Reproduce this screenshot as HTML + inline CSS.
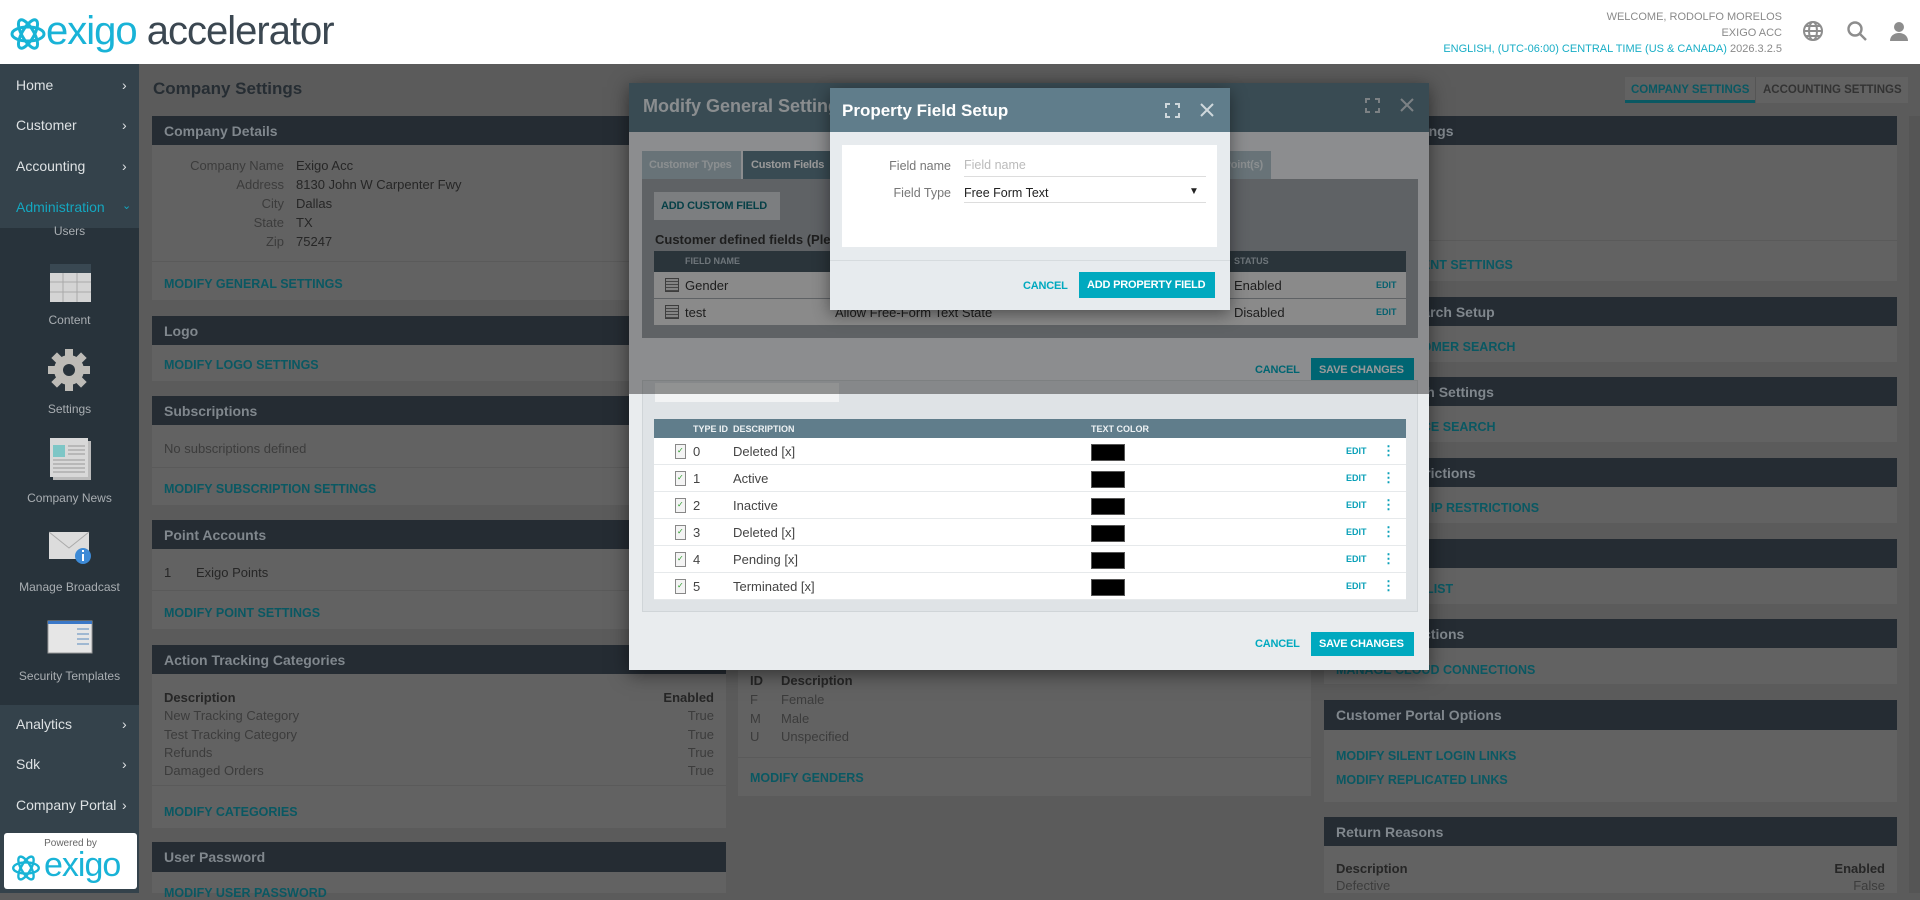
<!DOCTYPE html>
<html><head><meta charset="utf-8">
<style>
*{box-sizing:border-box;margin:0;padding:0}
body{width:1920px;height:893px;overflow:hidden;position:relative;background:#5b5b5b;font-family:"Liberation Sans",sans-serif;font-size:13px;color:#262626}
.a{position:absolute;white-space:nowrap}
.hdr{background:#252c33;color:#80878d;font-size:14px;font-weight:bold;padding-left:12px;display:flex;align-items:center}
.pb{background:#626262}
.lk{color:#0a5862;font-weight:bold;font-size:12.5px}
.nav{color:#dde1e3;font-size:14px}
.sub{color:#a9aeb2;font-size:12px;text-align:center;width:139px}
.lbl{color:#3c3c3c;text-align:right;width:132px}
.btn{font-size:11px;font-weight:bold;letter-spacing:-0.2px}
</style></head><body>

<!-- header -->
<div class="a" style="left:0;top:0;width:1920px;height:64px;background:#fff"></div>
<svg class="a" style="left:8px;top:14px" width="40" height="40" viewBox="0 0 40 40">
<g fill="none" stroke="#18b4d6" stroke-width="3">
<ellipse cx="20" cy="20" rx="16" ry="7"/>
<ellipse cx="20" cy="20" rx="16" ry="6" transform="rotate(60 20 20)"/>
<ellipse cx="20" cy="20" rx="16" ry="6" transform="rotate(-60 20 20)"/>
</g></svg>
<div class="a" style="left:46px;top:6px;font-size:40px;letter-spacing:-1px;line-height:50px"><span style="color:#19b3d7">exigo</span> <span style="color:#3b4751">accelerator</span></div>
<div class="a" style="right:138px;top:9px;font-size:11px;color:#8a8a8a;text-align:right;line-height:16px">WELCOME, RODOLFO MORELOS<br>EXIGO ACC<br><span style="color:#19aec6">ENGLISH, (UTC-06:00) CENTRAL TIME (US &amp; CANADA)</span> 2026.3.2.5</div>
<svg class="a" style="left:1802px;top:20px" width="22" height="22" viewBox="0 0 22 22"><g fill="none" stroke="#8d8d8d" stroke-width="2"><circle cx="11" cy="11" r="9"/><ellipse cx="11" cy="11" rx="4" ry="9"/><line x1="2" y1="11" x2="20" y2="11"/><line x1="4" y1="6" x2="18" y2="6"/><line x1="4" y1="16" x2="18" y2="16"/></g></svg>
<svg class="a" style="left:1846px;top:20px" width="22" height="22" viewBox="0 0 22 22"><g fill="none" stroke="#8d8d8d" stroke-width="2.4"><circle cx="9" cy="9" r="6.5"/><line x1="14" y1="14" x2="20" y2="20"/></g></svg>
<svg class="a" style="left:1888px;top:20px" width="22" height="22" viewBox="0 0 22 22"><g fill="#8d8d8d"><circle cx="11" cy="7" r="5"/><path d="M2 21c0-5 4-8 9-8s9 3 9 8z"/></g></svg>

<!-- sidebar -->
<div class="a" style="left:0;top:64px;width:139px;height:829px;background:#34424b"></div>
<div class="a" style="left:0;top:228px;width:139px;height:477px;background:#28333b"></div>
<div class="a nav" style="left:16px;top:77px">Home</div><div class="a nav" style="left:122px;top:77px">›</div>
<div class="a nav" style="left:16px;top:117px">Customer</div><div class="a nav" style="left:122px;top:117px">›</div>
<div class="a nav" style="left:16px;top:158px">Accounting</div><div class="a nav" style="left:122px;top:158px">›</div>
<div class="a nav" style="left:16px;top:199px;color:#14a7c0">Administration</div><div class="a" style="left:122px;top:199px;color:#14a7c0;font-size:11px">⌄</div>
<div class="a sub" style="left:0;top:224px">Users</div>
<svg class="a" style="left:49px;top:262px" width="43" height="42" viewBox="0 0 43 42"><rect x="1" y="4" width="41" height="36" fill="#d4d4d4"/><rect x="1" y="2" width="41" height="9" fill="#394852"/><g stroke="#aaa" stroke-width="1"><line x1="1" y1="20" x2="42" y2="20"/><line x1="1" y1="30" x2="42" y2="30"/><line x1="14" y1="11" x2="14" y2="40"/><line x1="28" y1="11" x2="28" y2="40"/></g></svg>
<div class="a sub" style="left:0;top:313px">Content</div>
<svg class="a" style="left:47px;top:348px" width="44" height="44" viewBox="-22 -22 44 44"><g fill="#bdbbb6"><circle r="15"/><g id="t"><rect x="-4" y="-21" width="8" height="10"/></g><use href="#t" transform="rotate(45)"/><use href="#t" transform="rotate(90)"/><use href="#t" transform="rotate(135)"/><use href="#t" transform="rotate(180)"/><use href="#t" transform="rotate(225)"/><use href="#t" transform="rotate(270)"/><use href="#t" transform="rotate(315)"/></g><circle r="6" fill="#28333b"/></svg>
<div class="a sub" style="left:0;top:402px">Settings</div>
<svg class="a" style="left:49px;top:437px" width="43" height="44" viewBox="0 0 43 44"><rect x="4" y="4" width="38" height="39" fill="#bbb"/><rect x="1" y="1" width="38" height="39" fill="#d8d8d8"/><rect x="4" y="8" width="12" height="12" fill="#7dc6c6"/><g stroke="#999"><line x1="19" y1="9" x2="36" y2="9"/><line x1="19" y1="13" x2="36" y2="13"/><line x1="19" y1="17" x2="36" y2="17"/><line x1="4" y1="23" x2="36" y2="23"/><line x1="4" y1="27" x2="36" y2="27"/><line x1="4" y1="31" x2="36" y2="31"/><line x1="4" y1="35" x2="36" y2="35"/></g></svg>
<div class="a sub" style="left:0;top:491px">Company News</div>
<svg class="a" style="left:49px;top:530px" width="44" height="36" viewBox="0 0 44 36"><rect x="0" y="2" width="40" height="27" fill="#dcdcdc"/><path d="M0 2l20 16 20-16" fill="none" stroke="#aaa"/><circle cx="34" cy="26" r="8" fill="#3d8ad6"/><rect x="33" y="24" width="2" height="7" fill="#fff"/><rect x="33" y="20" width="2" height="2" fill="#fff"/></svg>
<div class="a sub" style="left:0;top:580px">Manage Broadcast</div>
<svg class="a" style="left:47px;top:620px" width="46" height="34" viewBox="0 0 46 34"><rect x="1" y="1" width="44" height="32" fill="#e6e6e6" stroke="#999"/><rect x="1" y="1" width="44" height="3" fill="#3a78c8"/><g stroke="#9fb8d2" stroke-width="2"><line x1="30" y1="9" x2="42" y2="9"/><line x1="30" y1="14" x2="42" y2="14"/><line x1="30" y1="19" x2="42" y2="19"/><line x1="30" y1="24" x2="42" y2="24"/></g></svg>
<div class="a sub" style="left:0;top:669px">Security Templates</div>
<div class="a nav" style="left:16px;top:716px">Analytics</div><div class="a nav" style="left:122px;top:716px">›</div>
<div class="a nav" style="left:16px;top:756px">Sdk</div><div class="a nav" style="left:122px;top:756px">›</div>
<div class="a nav" style="left:16px;top:797px">Company Portal</div><div class="a nav" style="left:122px;top:797px">›</div>
<div class="a" style="left:4px;top:833px;width:133px;height:56px;background:#fff;border-radius:3px"></div>
<div class="a" style="left:0;top:838px;width:141px;text-align:center;font-size:10px;color:#666">Powered by</div>
<svg class="a" style="left:10px;top:852px" width="32" height="32" viewBox="0 0 40 40"><g fill="none" stroke="#18b4d6" stroke-width="3"><ellipse cx="20" cy="20" rx="16" ry="7"/><ellipse cx="20" cy="20" rx="16" ry="6" transform="rotate(60 20 20)"/><ellipse cx="20" cy="20" rx="16" ry="6" transform="rotate(-60 20 20)"/></g></svg>
<div class="a" style="left:44px;top:843px;font-size:34px;color:#19b3d7;letter-spacing:-1px;line-height:44px">exigo</div>
<div class="a" style="left:1909px;top:116px;width:11px;height:777px;background:#555"></div>

<!-- main -->
<div class="a" style="left:153px;top:79px;font-size:17px;font-weight:bold;color:#262d33">Company Settings</div>
<div class="a" style="left:1625px;top:77px;width:283px;height:26px;background:#626262"></div>
<div class="a lk" style="left:1631px;top:84px;font-size:11.5px">COMPANY SETTINGS</div>
<div class="a" style="left:1625px;top:100px;width:130px;height:3px;background:#0a5862"></div>
<div class="a" style="left:1755px;top:77px;width:1px;height:26px;background:#555"></div>
<div class="a" style="left:1763px;top:84px;font-size:11.5px;font-weight:bold;color:#333">ACCOUNTING SETTINGS</div>

<!-- left column -->
<div class="a hdr" style="left:152px;top:116px;width:574px;height:29px">Company Details</div>
<div class="a pb" style="left:152px;top:145px;width:574px;height:155px"></div>
<div class="a lbl" style="left:152px;top:158px">Company Name</div><div class="a" style="left:296px;top:158px">Exigo Acc</div>
<div class="a lbl" style="left:152px;top:177px">Address</div><div class="a" style="left:296px;top:177px">8130 John W Carpenter Fwy</div>
<div class="a lbl" style="left:152px;top:196px">City</div><div class="a" style="left:296px;top:196px">Dallas</div>
<div class="a lbl" style="left:152px;top:215px">State</div><div class="a" style="left:296px;top:215px">TX</div>
<div class="a lbl" style="left:152px;top:234px">Zip</div><div class="a" style="left:296px;top:234px">75247</div>
<div class="a" style="left:152px;top:261px;width:574px;height:1px;background:#5a5a5a"></div>
<div class="a lk" style="left:164px;top:277px">MODIFY GENERAL SETTINGS</div>

<div class="a hdr" style="left:152px;top:316px;width:574px;height:29px">Logo</div>
<div class="a pb" style="left:152px;top:345px;width:574px;height:36px"></div>
<div class="a lk" style="left:164px;top:358px">MODIFY LOGO SETTINGS</div>

<div class="a hdr" style="left:152px;top:396px;width:574px;height:29px">Subscriptions</div>
<div class="a pb" style="left:152px;top:425px;width:574px;height:80px"></div>
<div class="a" style="left:164px;top:441px;color:#3c3c3c">No subscriptions defined</div>
<div class="a" style="left:152px;top:467px;width:574px;height:1px;background:#5a5a5a"></div>
<div class="a lk" style="left:164px;top:482px">MODIFY SUBSCRIPTION SETTINGS</div>

<div class="a hdr" style="left:152px;top:520px;width:574px;height:29px">Point Accounts</div>
<div class="a pb" style="left:152px;top:549px;width:574px;height:80px"></div>
<div class="a" style="left:164px;top:565px">1</div><div class="a" style="left:196px;top:565px">Exigo Points</div>
<div class="a" style="left:152px;top:590px;width:574px;height:1px;background:#5a5a5a"></div>
<div class="a lk" style="left:164px;top:606px">MODIFY POINT SETTINGS</div>

<div class="a hdr" style="left:152px;top:645px;width:574px;height:29px">Action Tracking Categories</div>
<div class="a pb" style="left:152px;top:674px;width:574px;height:154px"></div>
<div class="a" style="left:164px;top:690px;font-weight:bold">Description</div><div class="a" style="left:560px;width:154px;text-align:right;top:690px;font-weight:bold">Enabled</div>
<div class="a" style="left:164px;top:708px;color:#3c3c3c">New Tracking Category</div><div class="a" style="left:560px;width:154px;text-align:right;top:708px;color:#3c3c3c">True</div>
<div class="a" style="left:164px;top:727px;color:#3c3c3c">Test Tracking Category</div><div class="a" style="left:560px;width:154px;text-align:right;top:727px;color:#3c3c3c">True</div>
<div class="a" style="left:164px;top:745px;color:#3c3c3c">Refunds</div><div class="a" style="left:560px;width:154px;text-align:right;top:745px;color:#3c3c3c">True</div>
<div class="a" style="left:164px;top:763px;color:#3c3c3c">Damaged Orders</div><div class="a" style="left:560px;width:154px;text-align:right;top:763px;color:#3c3c3c">True</div>
<div class="a" style="left:152px;top:785px;width:574px;height:1px;background:#5a5a5a"></div>
<div class="a lk" style="left:164px;top:805px">MODIFY CATEGORIES</div>

<div class="a hdr" style="left:152px;top:842px;width:574px;height:30px">User Password</div>
<div class="a pb" style="left:152px;top:872px;width:574px;height:21px"></div>
<div class="a lk" style="left:164px;top:886px">MODIFY USER PASSWORD</div>

<!-- middle column -->
<div class="a hdr" style="left:738px;top:116px;width:573px;height:29px">Genders</div>
<div class="a pb" style="left:738px;top:145px;width:573px;height:651px"></div>
<div class="a" style="left:750px;top:673px;font-weight:bold">ID</div><div class="a" style="left:781px;top:673px;font-weight:bold">Description</div>
<div class="a" style="left:750px;top:692px;color:#3c3c3c">F</div><div class="a" style="left:781px;top:692px;color:#3c3c3c">Female</div>
<div class="a" style="left:750px;top:711px;color:#3c3c3c">M</div><div class="a" style="left:781px;top:711px;color:#3c3c3c">Male</div>
<div class="a" style="left:750px;top:729px;color:#3c3c3c">U</div><div class="a" style="left:781px;top:729px;color:#3c3c3c">Unspecified</div>
<div class="a" style="left:738px;top:757px;width:573px;height:1px;background:#5a5a5a"></div>
<div class="a lk" style="left:750px;top:771px">MODIFY GENDERS</div>

<!-- right column -->
<div class="a hdr" style="left:1324px;top:116px;width:573px;height:29px">Payment Settings</div>
<div class="a pb" style="left:1324px;top:145px;width:573px;height:136px"></div>
<div class="a" style="left:1324px;top:240px;width:573px;height:1px;background:#5a5a5a"></div>
<div class="a lk" style="left:1336px;top:258px">MODIFY PAYMENT SETTINGS</div>
<div class="a hdr" style="left:1324px;top:297px;width:573px;height:29px">Customer Search Setup</div>
<div class="a pb" style="left:1324px;top:326px;width:573px;height:36px"></div>
<div class="a lk" style="left:1336px;top:340px">MODIFY CUSTOMER SEARCH</div>
<div class="a hdr" style="left:1324px;top:377px;width:573px;height:29px">Invoice Search Settings</div>
<div class="a pb" style="left:1324px;top:406px;width:573px;height:36px"></div>
<div class="a lk" style="left:1336px;top:420px">MODIFY INVOICE SEARCH</div>
<div class="a hdr" style="left:1324px;top:458px;width:573px;height:29px">Login IP Restrictions</div>
<div class="a pb" style="left:1324px;top:487px;width:573px;height:36px"></div>
<div class="a lk" style="left:1336px;top:501px">MODIFY LOGIN IP RESTRICTIONS</div>
<div class="a hdr" style="left:1324px;top:539px;width:573px;height:29px">Price List</div>
<div class="a pb" style="left:1324px;top:568px;width:573px;height:36px"></div>
<div class="a lk" style="left:1336px;top:582px">MODIFY PRICELIST</div>
<div class="a hdr" style="left:1324px;top:619px;width:573px;height:29px">Cloud Connections</div>
<div class="a pb" style="left:1324px;top:648px;width:573px;height:36px"></div>
<div class="a lk" style="left:1336px;top:663px">MANAGE CLOUD CONNECTIONS</div>
<div class="a hdr" style="left:1324px;top:700px;width:573px;height:30px">Customer Portal Options</div>
<div class="a pb" style="left:1324px;top:730px;width:573px;height:72px"></div>
<div class="a lk" style="left:1336px;top:749px">MODIFY SILENT LOGIN LINKS</div>
<div class="a lk" style="left:1336px;top:773px">MODIFY REPLICATED LINKS</div>
<div class="a hdr" style="left:1324px;top:817px;width:573px;height:29px">Return Reasons</div>
<div class="a pb" style="left:1324px;top:846px;width:573px;height:47px"></div>
<div class="a" style="left:1336px;top:861px;font-weight:bold">Description</div><div class="a" style="left:1740px;width:145px;text-align:right;top:861px;font-weight:bold">Enabled</div>
<div class="a" style="left:1336px;top:878px;color:#3c3c3c">Defective</div><div class="a" style="left:1740px;width:145px;text-align:right;top:878px;color:#3c3c3c">False</div>

<!-- modal 1 -->
<div class="a" style="left:629px;top:83px;width:800px;height:587px;background:#e9ecee;box-shadow:0 4px 18px rgba(0,0,0,.5)"></div>
<div class="a" style="left:629px;top:83px;width:800px;height:49px;background:#607d8b"></div>
<div class="a" style="left:643px;top:96px;font-size:18px;font-weight:bold;color:#e6ecef">Modify General Settings</div>
<svg class="a" style="left:1365px;top:98px" width="15" height="15" viewBox="0 0 15 15"><path d="M1 5V1h4M10 1h4v4M14 10v4h-4M5 14H1v-4" fill="none" stroke="#cfd8dc" stroke-width="2"/></svg>
<svg class="a" style="left:1400px;top:98px" width="14" height="14" viewBox="0 0 14 14"><path d="M1 1l12 12M13 1L1 13" stroke="#cfd8dc" stroke-width="2"/></svg>
<div class="a btn" style="left:642px;top:151px;width:99px;height:28px;background:#aec0c9;color:#e8eef1;padding:8px 0 0 7px">Customer Types</div>
<div class="a btn" style="left:743px;top:151px;width:90px;height:28px;background:#607d8b;color:#fff;padding:8px 0 0 8px">Custom Fields</div>
<div class="a btn" style="left:835px;top:151px;width:436px;height:28px;background:#aec0c9;color:#e8eef1;text-align:right;padding:8px 8px 0 0">Point(s)</div>
<div class="a" style="left:642px;top:179px;width:776px;height:159px;background:#9ea4a9"></div>
<div class="a btn" style="left:654px;top:192px;width:126px;height:28px;background:#cfd3d6;color:#0b6b77;padding:8px 0 0 7px">ADD CUSTOM FIELD</div>
<div class="a" style="left:655px;top:232px;font-size:13px;font-weight:bold;color:#333">Customer defined fields (Please note these fields are visible)</div>
<div class="a" style="left:654px;top:251px;width:752px;height:21px;background:#465762"></div>
<div class="a" style="left:685px;top:256px;font-size:9px;font-weight:bold;color:#b7c4cb">FIELD NAME</div>
<div class="a" style="left:1234px;top:256px;font-size:9px;font-weight:bold;color:#b7c4cb">STATUS</div>
<div class="a" style="left:654px;top:272px;width:752px;height:26px;background:#e6e6e6"></div>
<div class="a" style="left:654px;top:299px;width:752px;height:26px;background:#e6e6e6"></div>
<div class="a" style="left:665px;top:278px;width:14px;height:14px;border:1px solid #666;background:repeating-linear-gradient(#ddd 0 2px,#777 2px 3px)"></div>
<div class="a" style="left:665px;top:305px;width:14px;height:14px;border:1px solid #666;background:repeating-linear-gradient(#ddd 0 2px,#777 2px 3px)"></div>
<div class="a" style="left:685px;top:278px;color:#333">Gender</div><div class="a" style="left:1234px;top:278px;color:#333">Enabled</div><div class="a" style="left:1376px;top:280px;font-size:9px;font-weight:bold;color:#0aa0b8">EDIT</div>
<div class="a" style="left:685px;top:305px;color:#333">test</div><div class="a" style="left:835px;top:305px;color:#333">Allow Free-Form Text State</div><div class="a" style="left:1234px;top:305px;color:#333">Disabled</div><div class="a" style="left:1376px;top:307px;font-size:9px;font-weight:bold;color:#0aa0b8">EDIT</div>
<div class="a btn" style="left:1255px;top:364px;color:#00a9bf">CANCEL</div>
<div class="a btn" style="left:1311px;top:358px;width:103px;height:24px;background:#00a9bf;color:#fff;padding:6px 0 0 8px">SAVE CHANGES</div>
<div class="a" style="left:642px;top:380px;width:776px;height:232px;background:#dfe3e6;border:1px solid #d0d5d8"></div>
<div class="a" style="left:655px;top:383px;width:184px;height:19px;background:#f2f3f4"></div>
<!-- overlay on modal 1 -->
<div class="a" style="left:629px;top:83px;width:800px;height:311px;background:rgba(0,0,0,.4)"></div>

<div class="a" style="left:654px;top:419px;width:752px;height:19px;background:#607d8b"></div>
<div class="a" style="left:693px;top:424px;font-size:9px;font-weight:bold;color:#eef2f4">TYPE ID</div>
<div class="a" style="left:733px;top:424px;font-size:9px;font-weight:bold;color:#eef2f4">DESCRIPTION</div>
<div class="a" style="left:1091px;top:424px;font-size:9px;font-weight:bold;color:#eef2f4">TEXT COLOR</div>
<div class="a" style="left:654px;top:438px;width:752px;height:162px;background:repeating-linear-gradient(#fff 0 26px,#e6e9eb 26px 27px)"></div>
<div class="a btn" style="left:1255px;top:638px;color:#00a9bf">CANCEL</div>
<div class="a btn" style="left:1311px;top:632px;width:103px;height:24px;background:#00a9bf;color:#fff;padding:6px 0 0 8px">SAVE CHANGES</div>

<!-- modal 2 -->
<div class="a" style="left:830px;top:88px;width:400px;height:222px;background:#e7ebee;box-shadow:0 4px 16px rgba(0,0,0,.45)"></div>
<div class="a" style="left:830px;top:88px;width:400px;height:44px;background:#607d8b"></div>
<div class="a" style="left:842px;top:101px;font-size:17px;font-weight:bold;color:#fff">Property Field Setup</div>
<svg class="a" style="left:1165px;top:103px" width="15" height="15" viewBox="0 0 15 15"><path d="M1 5V1h4M10 1h4v4M14 10v4h-4M5 14H1v-4" fill="none" stroke="#cfd8dc" stroke-width="2"/></svg>
<svg class="a" style="left:1200px;top:103px" width="14" height="14" viewBox="0 0 14 14"><path d="M1 1l12 12M13 1L1 13" stroke="#cfd8dc" stroke-width="2"/></svg>
<div class="a" style="left:842px;top:145px;width:375px;height:102px;background:#fff"></div>
<div class="a" style="left:842px;top:159px;width:109px;text-align:right;color:#777;font-size:12.5px">Field name</div>
<div class="a" style="left:964px;top:158px;color:#bbb;font-size:12.5px">Field name</div>
<div class="a" style="left:964px;top:176px;width:242px;height:1px;background:#ddd"></div>
<div class="a" style="left:842px;top:186px;width:109px;text-align:right;color:#777;font-size:12.5px">Field Type</div>
<div class="a" style="left:964px;top:186px;color:#222;font-size:12.5px">Free Form Text</div>
<div class="a" style="left:1189px;top:186px;font-size:10px;color:#222">▼</div>
<div class="a" style="left:964px;top:202px;width:242px;height:1px;background:#ddd"></div>
<div class="a" style="left:830px;top:260px;width:400px;height:1px;background:#d6dbde"></div>
<div class="a btn" style="left:1023px;top:280px;color:#00a9bf">CANCEL</div>
<div class="a btn" style="left:1079px;top:272px;width:136px;height:26px;background:#00a9bf;color:#fff;padding:7px 0 0 8px">ADD PROPERTY FIELD</div>

<!-- type rows -->
<div class="a" style="left:0;top:0">
<div class="a" style="left:675px;top:444px;width:11px;height:15px;border:1px solid #888;background:#f4f4f4"></div><div class="a" style="left:677px;top:446px;font-size:8px;color:#2a9a2a">✓</div><div class="a" style="left:693px;top:444px;color:#444">0</div><div class="a" style="left:733px;top:444px;color:#444">Deleted [x]</div><div class="a" style="left:1091px;top:444px;width:34px;height:17px;background:#000;border:1px solid #555"></div><div class="a" style="left:1346px;top:446px;font-size:9px;font-weight:bold;color:#0aa0b8">EDIT</div><div class="a" style="left:1382px;top:443px;font-size:13px;font-weight:bold;color:#0aa0b8">⋮</div>
<div class="a" style="left:675px;top:471px;width:11px;height:15px;border:1px solid #888;background:#f4f4f4"></div><div class="a" style="left:677px;top:473px;font-size:8px;color:#2a9a2a">✓</div><div class="a" style="left:693px;top:471px;color:#444">1</div><div class="a" style="left:733px;top:471px;color:#444">Active</div><div class="a" style="left:1091px;top:471px;width:34px;height:17px;background:#000;border:1px solid #555"></div><div class="a" style="left:1346px;top:473px;font-size:9px;font-weight:bold;color:#0aa0b8">EDIT</div><div class="a" style="left:1382px;top:470px;font-size:13px;font-weight:bold;color:#0aa0b8">⋮</div>
<div class="a" style="left:675px;top:498px;width:11px;height:15px;border:1px solid #888;background:#f4f4f4"></div><div class="a" style="left:677px;top:500px;font-size:8px;color:#2a9a2a">✓</div><div class="a" style="left:693px;top:498px;color:#444">2</div><div class="a" style="left:733px;top:498px;color:#444">Inactive</div><div class="a" style="left:1091px;top:498px;width:34px;height:17px;background:#000;border:1px solid #555"></div><div class="a" style="left:1346px;top:500px;font-size:9px;font-weight:bold;color:#0aa0b8">EDIT</div><div class="a" style="left:1382px;top:497px;font-size:13px;font-weight:bold;color:#0aa0b8">⋮</div>
<div class="a" style="left:675px;top:525px;width:11px;height:15px;border:1px solid #888;background:#f4f4f4"></div><div class="a" style="left:677px;top:527px;font-size:8px;color:#2a9a2a">✓</div><div class="a" style="left:693px;top:525px;color:#444">3</div><div class="a" style="left:733px;top:525px;color:#444">Deleted [x]</div><div class="a" style="left:1091px;top:525px;width:34px;height:17px;background:#000;border:1px solid #555"></div><div class="a" style="left:1346px;top:527px;font-size:9px;font-weight:bold;color:#0aa0b8">EDIT</div><div class="a" style="left:1382px;top:524px;font-size:13px;font-weight:bold;color:#0aa0b8">⋮</div>
<div class="a" style="left:675px;top:552px;width:11px;height:15px;border:1px solid #888;background:#f4f4f4"></div><div class="a" style="left:677px;top:554px;font-size:8px;color:#2a9a2a">✓</div><div class="a" style="left:693px;top:552px;color:#444">4</div><div class="a" style="left:733px;top:552px;color:#444">Pending [x]</div><div class="a" style="left:1091px;top:552px;width:34px;height:17px;background:#000;border:1px solid #555"></div><div class="a" style="left:1346px;top:554px;font-size:9px;font-weight:bold;color:#0aa0b8">EDIT</div><div class="a" style="left:1382px;top:551px;font-size:13px;font-weight:bold;color:#0aa0b8">⋮</div>
<div class="a" style="left:675px;top:579px;width:11px;height:15px;border:1px solid #888;background:#f4f4f4"></div><div class="a" style="left:677px;top:581px;font-size:8px;color:#2a9a2a">✓</div><div class="a" style="left:693px;top:579px;color:#444">5</div><div class="a" style="left:733px;top:579px;color:#444">Terminated [x]</div><div class="a" style="left:1091px;top:579px;width:34px;height:17px;background:#000;border:1px solid #555"></div><div class="a" style="left:1346px;top:581px;font-size:9px;font-weight:bold;color:#0aa0b8">EDIT</div><div class="a" style="left:1382px;top:578px;font-size:13px;font-weight:bold;color:#0aa0b8">⋮</div>
</div>
</body></html>
